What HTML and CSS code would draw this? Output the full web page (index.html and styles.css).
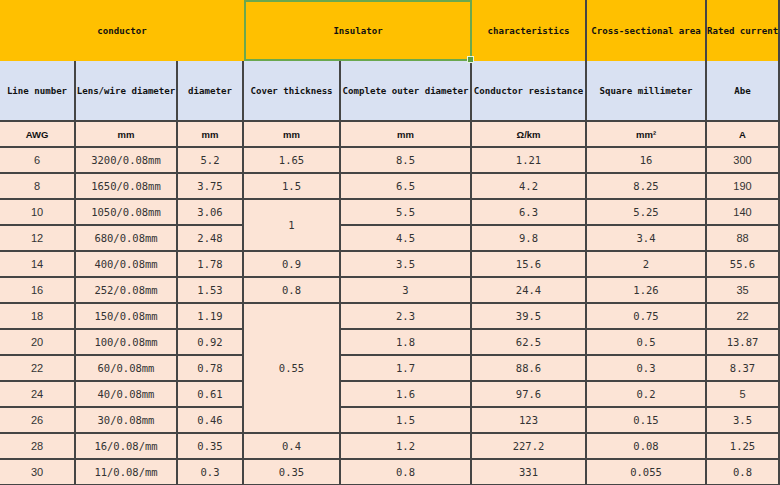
FILE: index.html
```html
<!DOCTYPE html>
<html>
<head>
<meta charset="utf-8">
<title>Wire table</title>
<link rel="stylesheet" href="styles.css">
</head>
<body>
<table class="sheet">
  <colgroup>
    <col class="c1"><col class="c2"><col class="c3"><col class="c4"><col class="c5"><col class="c6"><col class="c7"><col class="c8">
  </colgroup>
  <tr class="r-top">
    <td colspan="3" class="hd y conductor">conductor</td>
    <td colspan="2" class="hd y insulator">Insulator<span class="handle"></span></td>
    <td class="hd y">characteristics</td>
    <td class="hd y">Cross-sectional area</td>
    <td class="hd y">Rated current</td>
  </tr>
  <tr class="r-sub">
    <td class="hd b">Line number</td>
    <td class="hd b">Lens/wire diameter</td>
    <td class="hd b">diameter</td>
    <td class="hd b">Cover thickness</td>
    <td class="hd b">Complete outer diameter</td>
    <td class="hd b">Conductor resistance</td>
    <td class="hd b">Square millimeter</td>
    <td class="hd b">Abe</td>
  </tr>
  <tr class="r">
    <td class="u awg">AWG</td>
    <td class="u">mm</td>
    <td class="u">mm</td>
    <td class="u">mm</td>
    <td class="u">mm</td>
    <td class="u">Ω/km</td>
    <td class="u">mm²</td>
    <td class="u">A</td>
  </tr>
  <tr class="r"><td class="d s">6</td><td class="d">3200/0.08mm</td><td class="d">5.2</td><td class="d">1.65</td><td class="d">8.5</td><td class="d">1.21</td><td class="d">16</td><td class="d s">300</td></tr>
  <tr class="r"><td class="d s">8</td><td class="d">1650/0.08mm</td><td class="d">3.75</td><td class="d">1.5</td><td class="d">6.5</td><td class="d">4.2</td><td class="d">8.25</td><td class="d s">190</td></tr>
  <tr class="r"><td class="d s">10</td><td class="d">1050/0.08mm</td><td class="d">3.06</td><td class="d" rowspan="2">1</td><td class="d">5.5</td><td class="d">6.3</td><td class="d">5.25</td><td class="d s">140</td></tr>
  <tr class="r"><td class="d s">12</td><td class="d">680/0.08mm</td><td class="d">2.48</td><td class="d">4.5</td><td class="d">9.8</td><td class="d">3.4</td><td class="d s">88</td></tr>
  <tr class="r"><td class="d s">14</td><td class="d">400/0.08mm</td><td class="d">1.78</td><td class="d">0.9</td><td class="d">3.5</td><td class="d">15.6</td><td class="d">2</td><td class="d">55.6</td></tr>
  <tr class="r"><td class="d s">16</td><td class="d">252/0.08mm</td><td class="d">1.53</td><td class="d">0.8</td><td class="d">3</td><td class="d">24.4</td><td class="d">1.26</td><td class="d s">35</td></tr>
  <tr class="r"><td class="d s">18</td><td class="d">150/0.08mm</td><td class="d">1.19</td><td class="d" rowspan="5">0.55</td><td class="d">2.3</td><td class="d">39.5</td><td class="d">0.75</td><td class="d s">22</td></tr>
  <tr class="r"><td class="d s">20</td><td class="d">100/0.08mm</td><td class="d">0.92</td><td class="d">1.8</td><td class="d">62.5</td><td class="d">0.5</td><td class="d">13.87</td></tr>
  <tr class="r"><td class="d s">22</td><td class="d">60/0.08mm</td><td class="d">0.78</td><td class="d">1.7</td><td class="d">88.6</td><td class="d">0.3</td><td class="d">8.37</td></tr>
  <tr class="r"><td class="d s">24</td><td class="d">40/0.08mm</td><td class="d">0.61</td><td class="d">1.6</td><td class="d">97.6</td><td class="d">0.2</td><td class="d s">5</td></tr>
  <tr class="r"><td class="d s">26</td><td class="d">30/0.08mm</td><td class="d">0.46</td><td class="d">1.5</td><td class="d">123</td><td class="d">0.15</td><td class="d">3.5</td></tr>
  <tr class="r"><td class="d s">28</td><td class="d">16/0.08/mm</td><td class="d">0.35</td><td class="d">0.4</td><td class="d">1.2</td><td class="d">227.2</td><td class="d">0.08</td><td class="d">1.25</td></tr>
  <tr class="r"><td class="d s">30</td><td class="d">11/0.08/mm</td><td class="d">0.3</td><td class="d">0.35</td><td class="d">0.8</td><td class="d">331</td><td class="d">0.055</td><td class="d">0.8</td></tr>
</table>
</body>
</html>
```

FILE: styles.css
```css
html, body {
  margin: 0;
  padding: 0;
  background: #ffffff;
}

.sheet {
  border-collapse: separate;
  border-spacing: 0;
  table-layout: fixed;
  width: 780px;
}

.c1 { width: 76px; }
.c2 { width: 102px; }
.c3 { width: 66px; }
.c4 { width: 97px; }
.c5 { width: 131px; }
.c6 { width: 115px; }
.c7 { width: 120px; }
.c8 { width: 73px; }

.sheet td {
  padding: 0;
  text-align: center;
  vertical-align: middle;
  white-space: nowrap;
  overflow: visible;
  border-right: 2px solid #454545;
  border-bottom: 2px solid #454545;
  background: #fce4d6;
}

.r-top { height: 61px; }
.r-sub { height: 61px; }
.r { height: 26px; }

.hd {
  font-family: "DejaVu Sans Mono", monospace;
  font-weight: bold;
  font-size: 9.1px;
  color: #111111;
}

.sheet td.y {
  background: #ffc000;
  border-bottom: none;
}

.sheet td.conductor {
  border-right: none;
}

.sheet td.insulator {
  position: relative;
  border: 2px solid #6aa84f;
}

.handle {
  position: absolute;
  right: -4px;
  bottom: -4px;
  width: 5px;
  height: 5px;
  background: #5f9e45;
  border: 1px solid #e8f3e0;
}

.sheet td.b {
  background: #d9e1f2;
}

.u {
  font-family: "Liberation Sans", Arial, sans-serif;
  font-weight: bold;
  font-size: 9.5px;
  color: #111111;
}

.d {
  font-family: "DejaVu Sans Mono", monospace;
  font-size: 10.5px;
  color: #333333;
}

.d.s {
  font-family: "Liberation Sans", Arial, sans-serif;
  font-size: 11px;
}
```
